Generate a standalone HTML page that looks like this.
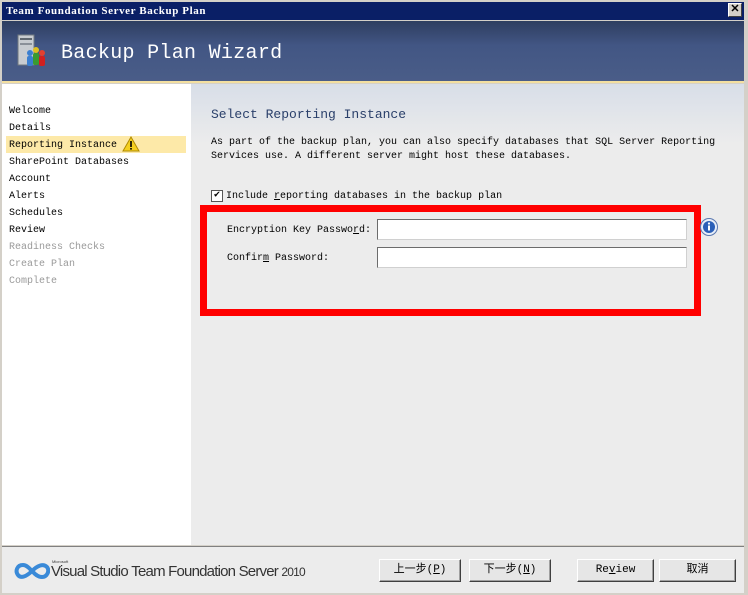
<!DOCTYPE html>
<html><head><meta charset="utf-8"><style>
*{margin:0;padding:0;box-sizing:border-box}
body{width:748px;height:595px;background:#d4d0c8;position:relative;overflow:hidden;font-family:"Liberation Mono","Noto Sans CJK SC",monospace;font-size:10px;color:#000}
.a{position:absolute}
.title{left:2px;top:2px;width:742px;height:18px;background:#0a1f66;color:#fff;font-family:"Liberation Serif",serif;font-weight:bold;font-size:11px;padding:3px 0 0 4px;letter-spacing:0.6px}
.close{right:6px;top:3px;width:14px;height:14px;background:#d4d0c8;border:1px solid;border-color:#fff #404040 #404040 #fff;font-size:11px;line-height:11px;text-align:center;font-family:"Liberation Sans",sans-serif;font-weight:bold;color:#000}
.hdr{left:2px;top:21px;width:742px;height:61px;background:linear-gradient(#2e3e60,#425684 40%,#4a5d88);}
.yl{left:2px;top:81px;width:742px;height:2px;background:#f3dfa0}
.htxt{left:61px;top:42px;color:#fff;font-size:20px;font-family:"Liberation Mono",monospace;letter-spacing:0.3px}
.nav{left:2px;top:84px;width:189px;height:461px;background:#fff}
.right{left:191px;top:84px;width:553px;height:461px;background:linear-gradient(#d8dee8,#ececec 60px,#ececec)}
.foot{left:2px;top:546px;width:742px;height:47px;background:#ececec;border-top:1px solid #808080}
.ni{position:absolute;left:9px;font-size:10px}
.g{color:#9a9a9a}
.hl{left:6px;top:136px;width:180px;height:17px;background:#fde9a8}
.tb{background:#fff;border:1px solid;border-color:#6c6c6c #d0d0d0 #d0d0d0 #6c6c6c;height:21px;width:310px}
.btn{position:absolute;top:559px;height:23px;background:#e6e6e6;border:1px solid;border-color:#fff #404040 #404040 #fff;box-shadow:inset -1px -1px 0 #a0a0a0;text-align:center;font-size:11px;line-height:21px;font-family:"Liberation Mono","Noto Sans CJK SC",monospace}
</style></head><body>
<div class="a title">Team Foundation Server Backup Plan</div>
<div class="a close">✕</div>
<div class="a hdr"></div>
<div class="a yl"></div>
<svg class="a" style="left:16px;top:33px" width="32" height="36" viewBox="0 0 32 36">
<rect x="2" y="2" width="16" height="30" fill="#c8ccd0" stroke="#707880"/>
<rect x="4" y="5" width="12" height="2" fill="#606870"/>
<rect x="4" y="10" width="12" height="2" fill="#8a9098"/>
<circle cx="14" cy="20" r="3" fill="#3b7fd0"/><rect x="11" y="23" width="6" height="10" rx="2" fill="#3b7fd0"/>
<circle cx="20" cy="17" r="3" fill="#e0c020"/><rect x="17" y="20" width="6" height="12" rx="2" fill="#3a9a30"/>
<circle cx="26" cy="20" r="3" fill="#e04030"/><rect x="23" y="23" width="6" height="10" rx="2" fill="#d02020"/>
</svg>
<div class="a htxt">Backup Plan Wizard</div>
<div class="a nav"></div>
<div class="a hl"></div>
<div class="ni" style="top:106px">Welcome</div>
<div class="ni" style="top:123px">Details</div>
<div class="ni" style="top:140px">Reporting Instance</div>
<svg class="a" style="left:122px;top:136px" width="18" height="16" viewBox="0 0 18 16"><path d="M9 1L17 15H1Z" fill="#f5d020" stroke="#b08a00"/><rect x="8.2" y="5" width="1.6" height="6" fill="#000"/><rect x="8.2" y="12" width="1.6" height="1.6" fill="#000"/></svg>
<div class="ni" style="top:157px">SharePoint Databases</div>
<div class="ni" style="top:174px">Account</div>
<div class="ni" style="top:191px">Alerts</div>
<div class="ni" style="top:208px">Schedules</div>
<div class="ni" style="top:225px">Review</div>
<div class="ni g" style="top:242px">Readiness Checks</div>
<div class="ni g" style="top:259px">Create Plan</div>
<div class="ni g" style="top:276px">Complete</div>
<div class="a right"></div>
<div class="a" style="left:211px;top:107px;font-size:13px;color:#2a3f6a">Select Reporting Instance</div>
<div class="a" style="left:211px;top:136px;line-height:14px;width:520px">As part of the backup plan, you can also specify databases that SQL Server Reporting<br>Services use. A different server might host these databases.</div>
<div class="a" style="left:211px;top:190px;width:12px;height:12px;background:#fff;border:1px solid #555;font-size:10px;line-height:10px;text-align:center">✔</div>
<div class="a" style="left:226px;top:191px">Include <u>r</u>eporting databases in the backup plan</div>
<div class="a" style="left:200px;top:205px;width:501px;height:111px;border:7px solid #ff0000"></div>
<div class="a" style="left:227px;top:225px">Encryption Key Passwo<u>r</u>d:</div>
<div class="a" style="left:227px;top:253px">Confir<u>m</u> Password:</div>
<div class="a tb" style="left:377px;top:219px"></div>
<div class="a tb" style="left:377px;top:247px"></div>
<svg class="a" style="left:699px;top:217px" width="20" height="20" viewBox="0 0 20 20"><circle cx="10" cy="10" r="8.5" fill="#e8eef8" stroke="#5a78b0"/><circle cx="10" cy="10" r="6" fill="#2a5fb8"/><rect x="9" y="8.5" width="2" height="5" fill="#fff"/><circle cx="10" cy="6.5" r="1.1" fill="#fff"/></svg>
<div class="a foot"></div>
<svg class="a" style="left:14px;top:562px" width="36" height="18" viewBox="0 0 36 18"><path d="M9 3C3 3 1 9 4 13 7 17 13 14 18 9 23 4 29 1 33 5 36 9 33 15 28 15 23 15 20 11 18 9 16 7 13 3 9 3Z" fill="none" stroke="#3a8ad8" stroke-width="4"/></svg>
<div class="a" style="left:52px;top:559px;font-size:4px;font-family:'Liberation Sans',sans-serif;color:#333">Microsoft</div>
<div class="a" style="left:51px;top:563px;font-family:'Liberation Sans',sans-serif;font-size:15px;letter-spacing:-0.8px;color:#333">Visual Studio<sup style="font-size:4px">.</sup> Team Foundation Server <span style="font-size:12px">2010</span></div>
<div class="btn" style="left:379px;width:82px">上一步(<u>P</u>)</div>
<div class="btn" style="left:469px;width:82px">下一步(<u>N</u>)</div>
<div class="btn" style="left:577px;width:77px">Re<u>v</u>iew</div>
<div class="btn" style="left:659px;width:77px">取消</div>
</body></html>
